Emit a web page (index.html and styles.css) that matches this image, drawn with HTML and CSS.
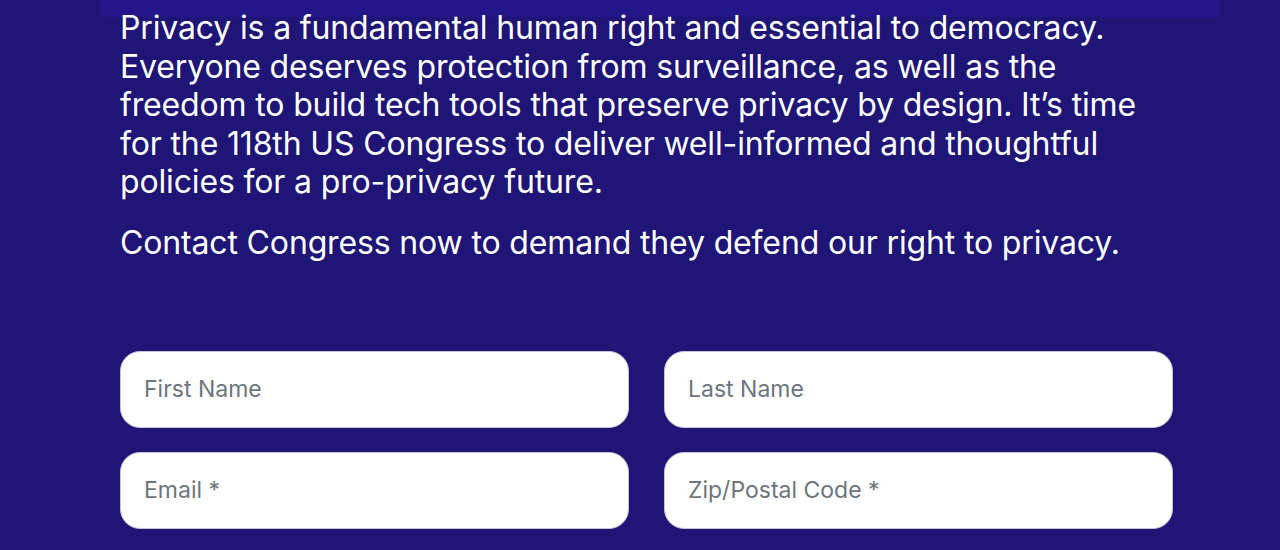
FILE: index.html
```html
<!DOCTYPE html>
<html lang="en">
<head>
<meta charset="utf-8">
<title>Privacy</title>
<link rel="stylesheet" href="styles.css">
</head>
<body>
<div class="top-band"></div>
<main class="section">
  <div class="intro">
    <p>Privacy is a fundamental human right and essential to democracy. Everyone deserves protection from surveillance, as well as the freedom to build tech tools that preserve privacy by design. It’s time for the 118th US Congress to deliver well-informed and thoughtful policies for a pro-privacy future.</p>
    <p>Contact Congress now to demand they defend our right to privacy.</p>
  </div>
  <form class="form">
    <input class="field" type="text" placeholder="First Name">
    <input class="field" type="text" placeholder="Last Name">
    <input class="field" type="email" placeholder="Email *">
    <input class="field" type="text" placeholder="Zip/Postal Code *">
  </form>
</main>
</body>
</html>
```

FILE: styles.css
```css
html, body {
  margin: 0;
  padding: 0;
}
body {
  background: #1f1577;
  font-family: Inter, "Noto Sans", sans-serif;
  color: #ffffff;
  height: 550px;
  overflow: hidden;
  position: relative;
}
.top-band {
  position: absolute;
  left: 100px;
  top: 0;
  width: 1120px;
  height: 17px;
  background: #22178a;
}
.section {
  position: relative;
  padding: 9px 106px 0 120px;
}
.intro {
  width: 1040px;
}
.intro p {
  margin: 0 0 22px;
  font-size: 32px;
  line-height: 38.5px;
  letter-spacing: -0.15px;
}
.form {
  margin-top: 89px;
  width: 1054px;
  display: grid;
  grid-template-columns: 509px 509px;
  column-gap: 35px;
  row-gap: 24px;
}
.field {
  box-sizing: border-box;
  height: 77px;
  border: 1px solid #c4c4d2;
  border-radius: 20px;
  background: #ffffff;
  padding: 0 0 2px 23px;
  font-family: Inter, "Noto Sans", sans-serif;
  font-size: 23px;
  color: #333;
  outline: none;
}
.field::placeholder {
  color: #6c757d;
  opacity: 1;
}
```
